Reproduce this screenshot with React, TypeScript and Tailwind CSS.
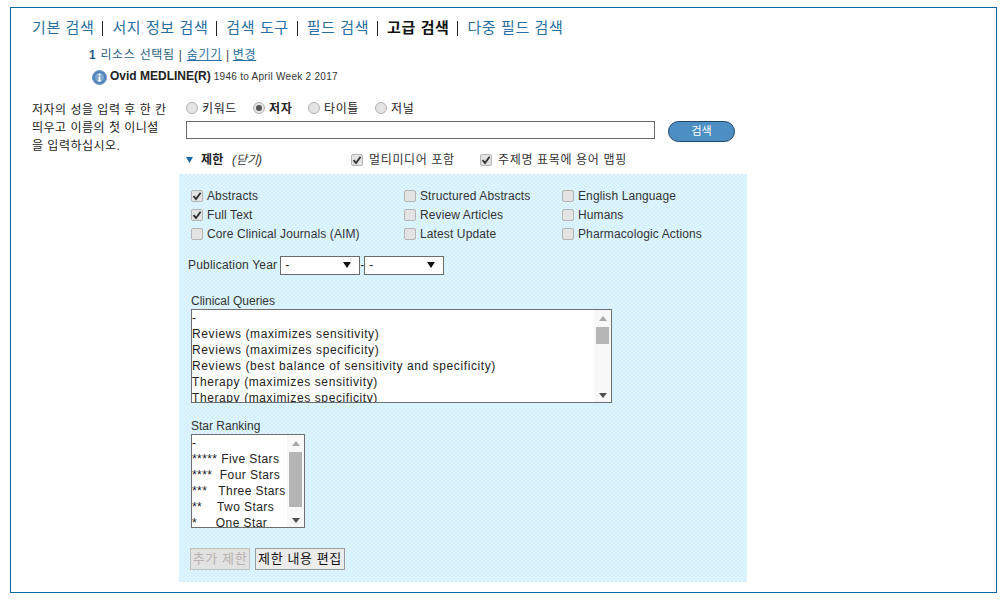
const FONT = "font-['Liberation_Sans','Noto_Sans_CJK_KR',sans-serif]";

function Check({ checked, label, className = "", wide }: { checked?: boolean; label: string; className?: string; wide?: boolean }) {
  return (
    <div className={`flex items-center h-[19px] ${className}`}>
      <span className={`w-[12px] h-[12px] rounded-[2px] border border-[#b4b4b4] bg-[#e3e3e3] flex items-center justify-center shrink-0 ${wide ? "mr-[6px]" : "mr-[4px]"}`}>
        {checked && (
          <svg width="10" height="10" viewBox="0 0 10 10">
            <path d="M1.5 5.2 L4 8 L8.6 1.8" fill="none" stroke="#333" strokeWidth="1.9" />
          </svg>
        )}
      </span>
      <span className={`text-[12px] text-[#333] whitespace-nowrap ${wide ? "tracking-[0.65px]" : "tracking-[0.12px]"}`}>{label}</span>
    </div>
  );
}

function Radio({ checked, label, bold, className = "" }: { checked?: boolean; label: string; bold?: boolean; className?: string }) {
  return (
    <div className={`flex items-center ${className}`}>
      <span className="w-[12px] h-[12px] rounded-full border border-[#b0b0b0] bg-[#e4e4e4] flex items-center justify-center mr-[4px] -mt-[3px]">
        {checked && <span className="w-[6px] h-[6px] rounded-full bg-[#555]" />}
      </span>
      <span className={`text-[12px] text-[#222] tracking-[0.6px] ${bold ? "font-bold" : ""}`}>{label}</span>
    </div>
  );
}

function Scrollbar({ thumbClass }: { thumbClass: string }) {
  return (
    <div className="w-[17px] shrink-0 flex flex-col items-center bg-[#f8f8f8]">
      <span className="h-[12px] pt-[5px] flex items-center justify-center text-[#a8a8a8]">
        <svg width="8" height="5" viewBox="0 0 8 5"><path d="M4 0 L8 5 L0 5 Z" fill="currentColor" /></svg>
      </span>
      <div className={`w-[13px] bg-[#b5b5b5] ${thumbClass}`} />
      <div className="flex-1" />
      <span className="h-[13px] flex items-center justify-center text-[#505050]">
        <svg width="8" height="5" viewBox="0 0 8 5"><path d="M0 0 L8 0 L4 5 Z" fill="currentColor" /></svg>
      </span>
    </div>
  );
}

function ListBox({ items, className, thumbClass, tracking }: { items: string[]; className: string; thumbClass: string; tracking: string }) {
  return (
    <div className={`flex border border-[#6f6f6f] bg-white ${className}`}>
      <div className={`flex-1 overflow-hidden text-[12px] leading-[16px] text-[#222] whitespace-pre ${tracking}`}>
        {items.map((t, i) => (
          <div key={i} className="h-[16px]">{t}</div>
        ))}
      </div>
      <Scrollbar thumbClass={thumbClass} />
    </div>
  );
}

function YearSelect() {
  return (
    <div className="w-[80px] h-[19px] border border-[#6a6a6a] bg-white flex items-center justify-between pl-[4px] pr-[8px] text-[12px] text-[#222]">
      <span>-</span>
      <svg width="8" height="6" viewBox="0 0 8 6"><path d="M0 0 L8 0 L4 6 Z" fill="#111" /></svg>
    </div>
  );
}

function Nav({ label, active, last }: { label: string; active?: boolean; last?: boolean }) {
  return (
    <>
      <span className={`text-[15px] tracking-[0.6px] whitespace-nowrap ${active ? "text-[#111] font-bold" : "text-[#2a6f9f]"}`}>{label}</span>
      {!last && <span className="w-[1px] h-[15px] bg-[#222] ml-[8px] mr-[9px]" />}
    </>
  );
}

function InfoIcon() {
  return (
    <svg width="15" height="15" viewBox="0 0 15 15" className="mr-[3px] mt-[2px] shrink-0">
      <circle cx="7.5" cy="7.5" r="7" fill="#4f82b6" stroke="#6f9cc8" />
      <circle cx="7.5" cy="7.5" r="4.6" fill="#7ea6cf" />
      <circle cx="7.5" cy="4.6" r="1.1" fill="#fff" />
      <path d="M6.6 6.4 H8.4 V10.4 H9.2 V11.4 H5.8 V10.4 H6.6 Z" fill="#fff" />
    </svg>
  );
}

export default function App() {
  return (
    <div className={`w-[1003px] h-[600px] bg-white pt-[7px] pl-[10px] ${FONT}`}>
      <div className="w-[987px] h-[586px] border border-[#0b68a3] pl-[21px] pt-[11px]">
        <div className="flex items-center h-[19px]">
          <Nav label="기본 검색" />
          <Nav label="서지 정보 검색" />
          <Nav label="검색 도구" />
          <Nav label="필드 검색" />
          <Nav label="고급 검색" active />
          <Nav label="다중 필드 검색" last />
        </div>

        <div className="ml-[57px] mt-[9px] h-[16px] flex items-center text-[12px] tracking-[0.7px] whitespace-pre">
          <span className="font-bold text-[#1f5a86]">1</span>
          <span className="text-[#2a5f86] ml-[4px]">리소스 선택됨</span>
          <span className="text-[#444] ml-[4px]">|</span>
          <span className="text-[#2a6f9f] underline ml-[4px]">숨기기</span>
          <span className="text-[#444] ml-[4px]">|</span>
          <span className="text-[#2a6f9f] underline ml-[3px]">변경</span>
        </div>

        <div className="ml-[60px] mt-[4px] h-[18px] flex items-center whitespace-pre">
          <InfoIcon />
          <span className="text-[12px] font-bold text-[#222]">Ovid MEDLINE(R)</span>
          <span className="text-[10px] tracking-[0.28px] text-[#333]"> 1946 to April Week 2 2017</span>
        </div>

        <div className="flex mt-[13px]">
          <div className="w-[147px] shrink-0 text-[12px] leading-[18px] tracking-[0.5px] text-[#222] pr-[11px] pt-[3px] break-all">
            저자의 성을 입력 후 한 칸 띄우고 이름의 첫 이니셜을 입력하십시오.
          </div>

          <div className="flex-1">
            <div className="ml-[7px] flex items-center h-[18px] mt-[2px]">
              <Radio label="키워드" className="w-[67px]" />
              <Radio checked bold label="저자" className="w-[55px]" />
              <Radio label="타이틀" className="w-[67px]" />
              <Radio label="저널" />
            </div>

            <div className="ml-[7px] mt-[3px] flex items-start">
              <div className="w-[469px] h-[18px] border border-[#6a6a6a] bg-white" />
              <button className="ml-[13px] w-[67px] h-[21px] rounded-full border border-[#20466b] bg-[#4d8fc2] text-white text-[11px]">
                검색
              </button>
            </div>

            <div className="ml-[7px] mt-[8px] h-[19px] flex items-center">
              <svg width="7" height="6" viewBox="0 0 7 6" className="mr-[8px]"><path d="M0 0 L7 0 L3.5 6 Z" fill="#1c6ba8" /></svg>
              <span className="text-[12px] font-bold tracking-[0.3px] text-[#222] mr-[6px] w-[25px] whitespace-nowrap">제한</span>
              <span className="text-[12px] italic text-[#333] w-[119px]">(닫기)</span>
              <Check checked wide label="멀티미디어 포함" className="w-[129px]" />
              <Check checked wide label="주제명 표목에 용어 맵핑" />
            </div>

            <div className="w-[568px] h-[408px] bg-[#d9f3fd] bg-[repeating-conic-gradient(#d3f0fe_0_25%,#e0f5fd_0_50%)] bg-[length:4px_4px] mt-[5px] pl-[12px] pt-[12px]">
              <div className="grid grid-cols-[213px_158px_1fr]">
                <Check checked label="Abstracts" />
                <Check label="Structured Abstracts" />
                <Check label="English Language" />
                <Check checked label="Full Text" />
                <Check label="Review Articles" />
                <Check label="Humans" />
                <Check label="Core Clinical Journals (AIM)" />
                <Check label="Latest Update" />
                <Check label="Pharmacologic Actions" />
              </div>

              <div className="flex items-center -ml-[3px] mt-[12px] h-[20px] text-[12px] text-[#333]">
                <span className="mr-[3px] tracking-[0.2px]">Publication Year</span>
                <YearSelect />
                <span className="w-[4px] text-center">-</span>
                <YearSelect />
              </div>

              <div className="mt-[18px] h-[16px] leading-[16px] text-[12px] text-[#333]">Clinical Queries</div>
              <ListBox
                className="w-[421px] h-[94px]"
                thumbClass="h-[17px] mt-[5px]"
                tracking="tracking-[0.6px]"
                items={[
                  "-",
                  "Reviews (maximizes sensitivity)",
                  "Reviews (maximizes specificity)",
                  "Reviews (best balance of sensitivity and specificity)",
                  "Therapy (maximizes sensitivity)",
                  "Therapy (maximizes specificity)",
                ]}
              />

              <div className="mt-[15px] h-[16px] leading-[16px] text-[12px] text-[#333]">Star Ranking</div>
              <ListBox
                className="w-[114px] h-[94px]"
                thumbClass="h-[55px] mt-[5px]"
                tracking="tracking-[0.42px]"
                items={[
                  "-",
                  "***** Five Stars",
                  "****  Four Stars",
                  "***   Three Stars",
                  "**    Two Stars",
                  "*     One Star",
                ]}
              />

              <div className="flex items-center mt-[20px] gap-[5px] -ml-[1px]">
                <button className="w-[60px] h-[22px] border border-[#c0c0c0] bg-[#e2e2e2] text-[13px] tracking-[0.6px] text-[#b9b0b0] whitespace-nowrap">
                  추가 제한
                </button>
                <button className="w-[90px] h-[22px] border border-[#9a9a9a] bg-[#ececec] text-[13px] tracking-[0.6px] text-[#111] whitespace-nowrap">
                  제한 내용 편집
                </button>
              </div>
            </div>
          </div>
        </div>
      </div>
    </div>
  );
}
